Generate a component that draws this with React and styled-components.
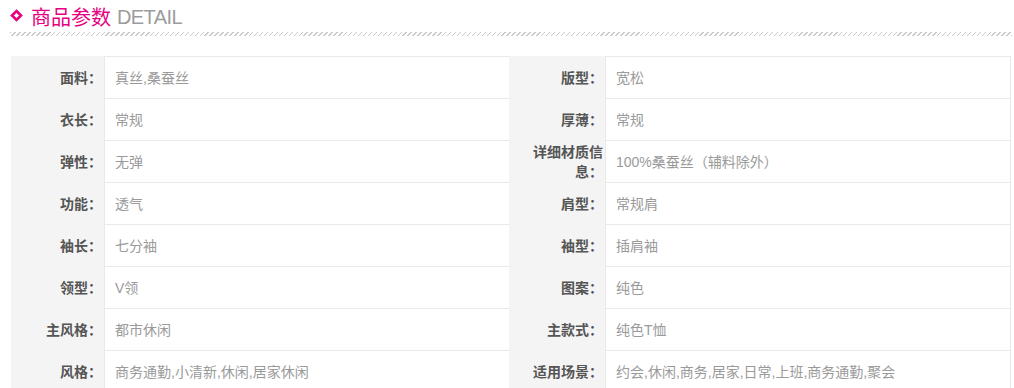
import React from 'react';
import styled, { createGlobalStyle } from 'styled-components';

const GlobalStyle = createGlobalStyle`
  body {
    margin: 0;
    background: #fff;
    font-family: "Liberation Sans", "Noto Sans CJK SC", sans-serif;
  }
`;

const Wrap = styled.div`
  width: 1014px;
`;

const Header = styled.div`
  display: flex;
  align-items: center;
  height: 30px;
  padding: 2px 0 0 10px;
  line-height: 30px;
`;

const Diamond = styled.svg`
  width: 13px;
  height: 13px;
  margin-right: 8px;
  margin-top: -3px;
`;

const Title = styled.span`
  font-size: 20px;
  color: #e6007f;
  font-family: "Noto Sans CJK SC", sans-serif;
`;

const Sub = styled.span`
  font-size: 20px;
  color: #9c9c9c;
  margin-left: 6px;
  letter-spacing: -0.6px;
`;

const Stripe = styled.div`
  margin-left: 10px;
  width: 1002px;
  height: 4px;
  background-image: repeating-linear-gradient(135deg, #c9c9c9 0 1px, transparent 1px 3.5px);
`;

const Table = styled.div`
  margin: 20px 0 0 11px;
  width: 1000px;
`;

const Row = styled.div`
  display: grid;
  grid-template-columns: 93px 405px 96px 406px;
  height: 42px;
`;

const Label = styled.div`
  display: flex;
  align-items: center;
  justify-content: flex-end;
  box-sizing: border-box;
  padding: 0 2px 0 12px;
  background: #f4f4f4;
  text-align: right;
  font-size: 14px;
  line-height: 20px;
  font-weight: bold;
  color: #555;
  font-family: "Noto Sans CJK SC", sans-serif;
`;

const Value = styled.div`
  display: flex;
  align-items: center;
  box-sizing: border-box;
  padding-left: 10px;
  border-top: 1px solid #e9e9e9;
  border-left: 1px solid #e9e9e9;
  border-right: ${(p) => (p.$last ? '1px solid #e9e9e9' : 'none')};
  font-size: 14px;
  line-height: 20px;
  color: #9a9a9a;
  white-space: nowrap;
`;

const params = [
  ['面料', '真丝,桑蚕丝', '版型', '宽松'],
  ['衣长', '常规', '厚薄', '常规'],
  ['弹性', '无弹', '详细材质信息', '100%桑蚕丝（辅料除外）'],
  ['功能', '透气', '肩型', '常规肩'],
  ['袖长', '七分袖', '袖型', '插肩袖'],
  ['领型', 'V领', '图案', '纯色'],
  ['主风格', '都市休闲', '主款式', '纯色T恤'],
  ['风格', '商务通勤,小清新,休闲,居家休闲', '适用场景', '约会,休闲,商务,居家,日常,上班,商务通勤,聚会'],
];

export default function App() {
  return (
    <Wrap>
      <GlobalStyle />
      <Header>
        <Diamond viewBox="0 0 13 13">
          <path d="M6.5 2 L11 6.5 L6.5 11 L2 6.5 Z" fill="none" stroke="#e6007f" strokeWidth="2.6" />
        </Diamond>
        <Title>商品参数</Title>
        <Sub>DETAIL</Sub>
      </Header>
      <Stripe />
      <Table>
        {params.map(([k1, v1, k2, v2]) => (
          <Row key={k1}>
            <Label>{k1}：</Label>
            <Value>{v1}</Value>
            <Label>{k2}：</Label>
            <Value $last>{v2}</Value>
          </Row>
        ))}
      </Table>
    </Wrap>
  );
}
